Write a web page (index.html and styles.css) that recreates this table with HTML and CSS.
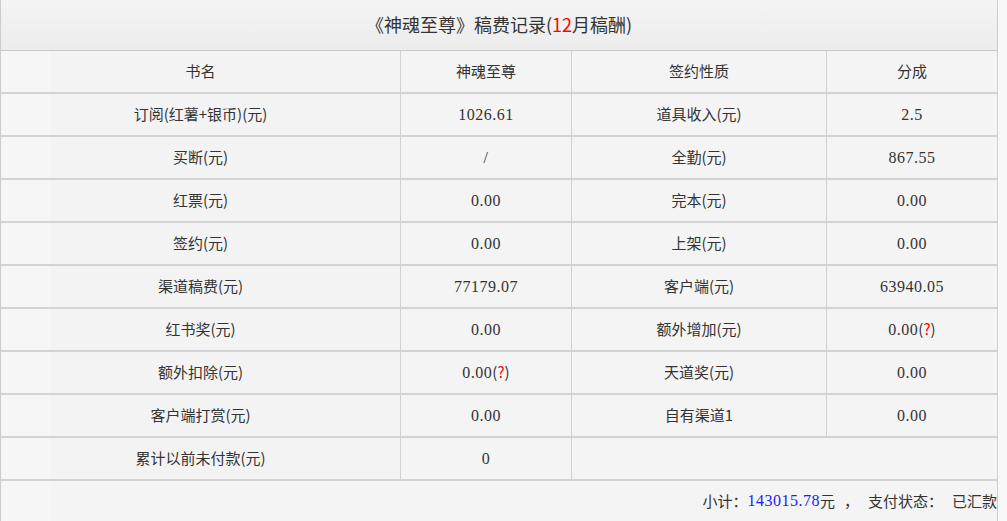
FILE: index.html
```html
<!DOCTYPE html>
<html lang="zh-CN">
<head>
<meta charset="utf-8">
<title>稿费记录</title>
<link rel="stylesheet" href="styles.css">
</head>
<body>
<div class="record">
  <div class="title">《神魂至尊》稿费记录(<span class="red">12</span>月稿酬)</div>
  <table class="grid">
    <colgroup>
      <col class="c1"><col class="c2"><col class="c3"><col class="c4">
    </colgroup>
    <tr><td>书名</td><td>神魂至尊</td><td>签约性质</td><td>分成</td></tr>
    <tr><td>订阅(红薯+银币)(元)</td><td><span class="n">1026.61</span></td><td>道具收入(元)</td><td><span class="n">2.5</span></td></tr>
    <tr><td>买断(元)</td><td><span class="n">/</span></td><td>全勤(元)</td><td><span class="n">867.55</span></td></tr>
    <tr><td>红票(元)</td><td><span class="n">0.00</span></td><td>完本(元)</td><td><span class="n">0.00</span></td></tr>
    <tr><td>签约(元)</td><td><span class="n">0.00</span></td><td>上架(元)</td><td><span class="n">0.00</span></td></tr>
    <tr><td>渠道稿费(元)</td><td><span class="n">77179.07</span></td><td>客户端(元)</td><td><span class="n">63940.05</span></td></tr>
    <tr><td>红书奖(元)</td><td><span class="n">0.00</span></td><td>额外增加(元)</td><td><span class="n">0.00</span>(<span class="red">?</span>)</td></tr>
    <tr><td>额外扣除(元)</td><td><span class="n">0.00</span>(<span class="red">?</span>)</td><td>天道奖(元)</td><td><span class="n">0.00</span></td></tr>
    <tr><td>客户端打赏(元)</td><td><span class="n">0.00</span></td><td>自有渠道1</td><td><span class="n">0.00</span></td></tr>
    <tr><td>累计以前未付款(元)</td><td><span class="n">0</span></td><td colspan="2"></td></tr>
  </table>
  <div class="footer">小计：<span class="n blue">143015.78</span>元<span class="sp"></span>，<span class="sp"></span>支付状态：<span class="sp"></span>已汇款</div>
</div>
</body>
</html>
```
FILE: styles.css
```css
html, body {
  margin: 0;
  padding: 0;
}
body {
  background: #f8f8f8;
  color: #333;
  font-family: "Noto Sans CJK SC", "Liberation Sans", sans-serif;
  font-size: 15px;
}
.record {
  width: 998px;
}
.title {
  height: 51px;
  box-sizing: border-box;
  padding-bottom: 2px;
  border-left: 1px solid #cccccc;
  border-right: 1px solid #cccccc;
  border-bottom: 1px solid #c8c8c8;
  background: linear-gradient(#f4f4f4, #ececec);
  display: flex;
  align-items: center;
  justify-content: center;
  font-size: 18px;
}
.red {
  color: #ff0000;
}
.grid {
  width: 998px;
  border-collapse: separate;
  border-spacing: 0;
  table-layout: fixed;
}
.c1 { width: 401px; }
.c2 { width: 171px; }
.c3 { width: 255px; }
.c4 { width: 171px; }
.grid td {
  height: 43px;
  box-sizing: border-box;
  padding: 0 0 2px 0;
  text-align: center;
  vertical-align: middle;
  background: #f4f4f4;
  border-right: 1px solid #d0d0d0;
  border-bottom: 2px solid #d3d3d3;
  white-space: nowrap;
}
.grid td:first-child {
  border-left: 1px solid #cccccc;
  background: linear-gradient(to right, #f6f6f6 50px, #f3f3f3 50px);
}
.n {
  font-family: "Liberation Serif", "DejaVu Serif", serif;
  font-size: 16px;
  letter-spacing: 0.5px;
}
.blue {
  color: #1a1aff;
}
.footer {
  height: 40px;
  box-sizing: border-box;
  padding-bottom: 1px;
  border-left: 1px solid #cccccc;
  border-right: 1px solid #cccccc;
  background: linear-gradient(to right, #f6f6f6 50px, #f4f4f4 50px);
  display: flex;
  align-items: center;
  justify-content: flex-end;
  white-space: pre;
}
.sp {
  display: inline-block;
  width: 9px;
}
```
